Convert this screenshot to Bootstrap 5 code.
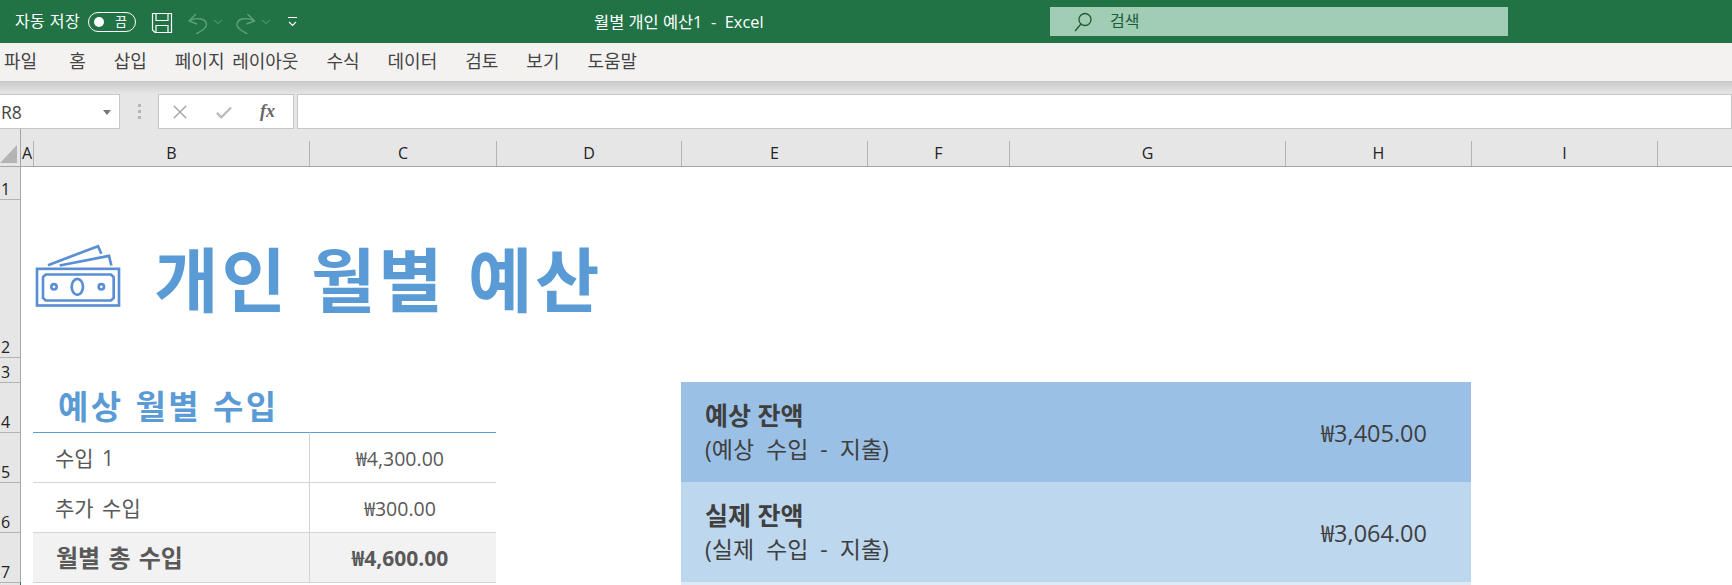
<!DOCTYPE html>
<html lang="ko">
<head>
<meta charset="utf-8">
<title>월별 개인 예산1 - Excel</title>
<link href="https://cdn.jsdelivr.net/npm/bootstrap@5.3.0/dist/css/bootstrap.min.css" rel="stylesheet">
<style>
html,body{height:585px;overflow:hidden;background:#fff}
body{font-family:"Open Sans","Noto Sans CJK KR",sans-serif;color:#595959;line-height:1.2}
.xl-title{height:43px;background:#217346;color:#fff;font-size:14px}
.xl-auto{margin-left:15px;font-size:16px;letter-spacing:.4px}
.xl-toggle{width:48px;height:20px;margin-left:8px;border:1px solid #fff;border-radius:10px;padding:0 8px 0 5px;font-size:13px}
.xl-dot{width:10px;height:10px;border-radius:50%;background:#fff}
.xl-qat{margin-left:15px;gap:7px}
.xl-save{margin:3px 8px 0 0}
.xl-cust{margin-left:2px}
.xl-doc{margin-left:295px;width:456px;font-size:16.4px;white-space:pre}
.xl-search{width:458px;height:29px;background:#a0cdb3;color:#1d5c3a;padding-left:23px;gap:17px;font-size:16px}
.xl-tabs{height:38px;background:#f3f2f1;color:#444;font-size:18px;word-spacing:3px;padding-left:4px;gap:28px}
.xl-tabs span:first-child{margin-right:4px}
.xl-shadow{height:13px;background:linear-gradient(#c9c9c9,#e6e6e6)}
.xl-fbar{height:35px;background:#e6e6e6;gap:4px}
.xl-box{height:35px;background:#fff;border:1px solid #c6c6c6}
.xl-name{width:120px;border-left:0;padding:2px 8px 0 1px;font-size:17.5px;color:#444}
.xl-caret{width:0;height:0;border:4px solid transparent;border-top:5px solid #777;border-bottom:0}
.xl-grip{width:30px;gap:3px}
.xl-grip i{width:3px;height:3px;background:#b5b5b5;display:block}
.xl-fx{width:136px;margin-right:-1px;padding-left:13px;gap:27px}
.xl-fxt{font-family:"Liberation Serif",serif;font-style:italic;font-weight:700;font-size:18px;color:#666}
.xl-grid{display:grid;grid-template-columns:21px 12px 276px 187px 185px 186px 142px 276px 186px 186px 1fr;grid-template-rows:37px 33px 158px 25px 50px 50px 50px 50px 3px;background:#fff}
.xl-cnr{background:#e6e6e6;position:relative;height:38px;border-bottom:1px solid #a6a6a6;border-right:1px solid #a6a6a6;z-index:1}
.xl-cnr::after{content:"";position:absolute;left:0;bottom:3px;border-style:solid;border-width:0 0 18px 17px;border-color:transparent transparent #b4b4b4 transparent}
.xl-colbg{height:38px;z-index:1;background:#e6e6e6;border-bottom:1px solid #a6a6a6;display:flex;align-items:flex-end}
.xl-col{flex:1;height:25px;display:flex;align-items:center;justify-content:center;border-left:1px solid #b4b4b4;font-size:16px;color:#222}
.xl-colbg.xl-first .xl-col{border-left:0}
.xl-row{grid-column:1;background:#e6e6e6;border-right:1px solid #a6a6a6;border-top:1px solid #b4b4b4;font-size:16px;color:#222;padding-left:1px;display:flex;align-items:flex-end;line-height:20px;overflow:hidden}
.xl-r8{border-right-color:#217346}
.xl-head{grid-column:2/7;grid-row:3;padding-left:12.3px;padding-top:40px;gap:31px;align-items:flex-start}
.xl-head svg{margin-top:4px}
.xl-h1{font-size:70px;font-weight:700;color:#5b9bd5;letter-spacing:2.8px;line-height:76px;white-space:nowrap;font-family:"Noto Sans CJK KR",sans-serif}
.xl-h2{grid-column:3/5;grid-row:5;font-size:33px;font-weight:700;color:#5b9bd5;padding-left:25px;line-height:47px;letter-spacing:2.5px;font-family:"Noto Sans CJK KR",sans-serif;white-space:nowrap}
.xl-lab,.xl-amt{border-top:1px solid #d4d4d4;display:flex;align-items:center;font-size:19.5px;padding-top:2px}
.xl-lab{grid-column:3;padding-left:22px;font-size:21px;word-spacing:3px}
.xl-amt{grid-column:4;justify-content:center;padding-right:6px;border-left:1px solid #d4d4d4}
.xl-blue{border-top-color:#5b9bd5}
.xl-tot{background:#f2f2f2;font-weight:700}
.xl-lab.xl-tot{font-size:24px;padding-left:23px;word-spacing:2px}
.xl-amt.xl-tot{font-size:21px}
.xl-rule{grid-column:3/5;grid-row:9;border-top:1px solid #d4d4d4}
.xl-pan{grid-column:6/10;padding:0 44px 0 24px;color:#3f3f3f}
.xl-p1{grid-row:5/7;background:#9bc0e6}
.xl-p2{grid-row:7/9;background:#bdd7ee}
.xl-p3{grid-row:9;background:#deebf7}
.xl-pt{font-size:25px;font-weight:700;line-height:35px}
.xl-ps{font-size:23px;word-spacing:6px;line-height:33px}
.xl-pa{font-size:23.5px;padding-top:2px}
</style>
</head>
<body>
<header class="xl-title d-flex align-items-center">
  <span class="xl-auto">자동 저장</span>
  <span class="xl-toggle d-flex align-items-center justify-content-between"><span class="xl-dot"></span><span>끔</span></span>
  <div class="xl-qat d-flex align-items-center">
    <svg class="xl-save" width="22" height="22" viewBox="0 0 22 22" fill="none" stroke="#fff" stroke-width="1.2"><path d="M1.5 1.5h19v19H4l-2.5-2.5z"/><path d="M5 1.5v7h12v-7M5 20.500v-7h12v7"/></svg>
    <svg width="41" height="24" viewBox="0 0 41 24" fill="none" stroke="#5fa07c" stroke-width="1.4"><path d="M8 4 1 11l8 3M1 11C8 7 18 8 18.500 14.500 18.900 18 14 21 8 24"/><path d="M26 10l4 3.500 4-3.500" stroke-width="1"/></svg>
    <svg width="41" height="24" viewBox="0 0 41 24" fill="none" stroke="#5fa07c" stroke-width="1.4"><path d="M11.500 4l7 7-8 3M18.500 11C11.500 7 1.500 8 1 14.500.6 18 5.500 21 11.500 24"/><path d="M26 10l4 3.500 4-3.500" stroke-width="1"/></svg>
    <svg class="xl-cust" width="13" height="12" viewBox="0 0 13 12" fill="none" stroke="#fff" stroke-width="1.1"><path d="M2 1.500h9M3 6l3.500 3.500L10 6"/></svg>
  </div>
  <span class="xl-doc">월별 개인 예산1  -  Excel</span>
  <div class="xl-search d-flex align-items-center">
    <svg width="20" height="20" viewBox="0 0 20 20" fill="none" stroke="#1d5c3a" stroke-width="1.300"><circle cx="12" cy="7.500" r="6"/><path d="M8 12l-6 7"/></svg>
    <span>검색</span>
  </div>
</header>
<nav class="xl-tabs d-flex align-items-center">
  <span>파일</span><span>홈</span><span>삽입</span><span>페이지 레이아웃</span><span>수식</span><span>데이터</span><span>검토</span><span>보기</span><span>도움말</span>
</nav>
<div class="xl-shadow"></div>
<div class="xl-fbar d-flex">
  <div class="xl-box xl-name d-flex align-items-center justify-content-between"><span>R8</span><span class="xl-caret"></span></div>
  <div class="xl-grip d-flex flex-column align-items-center justify-content-center"><i></i><i></i><i></i></div>
  <div class="xl-box xl-fx d-flex align-items-center">
    <svg width="16" height="16" viewBox="0 0 18 18" fill="none" stroke="#aaa" stroke-width="1.8"><path d="M2 2l14 14M16 2 2 16"/></svg>
    <svg width="18" height="16" viewBox="0 0 18 18" fill="none" stroke="#bbb" stroke-width="2.6"><path d="M1 10l5 5L17 4"/></svg>
    <span class="xl-fxt">fx</span>
  </div>
  <div class="xl-box flex-grow-1"></div>
</div>
<main class="xl-grid">
  <div class="xl-cnr"></div>
  <div class="xl-colbg xl-first"><div class="xl-col">A</div></div>
  <div class="xl-colbg"><div class="xl-col">B</div></div>
  <div class="xl-colbg"><div class="xl-col">C</div></div>
  <div class="xl-colbg"><div class="xl-col">D</div></div>
  <div class="xl-colbg"><div class="xl-col">E</div></div>
  <div class="xl-colbg"><div class="xl-col">F</div></div>
  <div class="xl-colbg"><div class="xl-col">G</div></div>
  <div class="xl-colbg"><div class="xl-col">H</div></div>
  <div class="xl-colbg"><div class="xl-col">I</div></div>
  <div class="xl-colbg"><div class="xl-col"></div></div>

  <div class="xl-row" style="grid-row:2">1</div>
  <div class="xl-row" style="grid-row:3">2</div>
  <div class="xl-row" style="grid-row:4">3</div>
  <div class="xl-row" style="grid-row:5">4</div>
  <div class="xl-row" style="grid-row:6">5</div>
  <div class="xl-row" style="grid-row:7">6</div>
  <div class="xl-row" style="grid-row:8">7</div>
  <div class="xl-row xl-r8" style="grid-row:9"></div>

  <div class="xl-head d-flex">
    <svg width="90" height="67" viewBox="40 40 270 200" fill="none" stroke="#5b8fd5" stroke-width="8">
      <rect x="52" y="117" width="246" height="110"/>
      <path d="M78 134h196l8 8v62l-8 8H78l-8-8v-62z"/>
      <circle cx="103" cy="171" r="8"/><circle cx="245" cy="171" r="8"/>
      <ellipse cx="173" cy="171" rx="17" ry="24"/>
      <path d="M85 106 235 49l10 23M120 107l148-29 7 29"/>
    </svg>
    <h1 class="xl-h1 m-0">개인 월별 예산</h1>
  </div>

  <h2 class="xl-h2 m-0">예상 월별 수입</h2>
  <div class="xl-lab xl-blue" style="grid-row:6">수입 1</div>
  <div class="xl-amt xl-blue" style="grid-row:6">₩4,300.00</div>
  <div class="xl-lab" style="grid-row:7">추가 수입</div>
  <div class="xl-amt" style="grid-row:7">₩300.00</div>
  <div class="xl-lab xl-tot" style="grid-row:8">월별 총 수입</div>
  <div class="xl-amt xl-tot" style="grid-row:8">₩4,600.00</div>
  <div class="xl-rule"></div>

  <section class="xl-pan xl-p1 d-flex align-items-center justify-content-between">
    <div><div class="xl-pt">예상 잔액</div><div class="xl-ps">(예상 수입 - 지출)</div></div>
    <div class="xl-pa">₩3,405.00</div>
  </section>
  <section class="xl-pan xl-p2 d-flex align-items-center justify-content-between">
    <div><div class="xl-pt">실제 잔액</div><div class="xl-ps">(실제 수입 - 지출)</div></div>
    <div class="xl-pa">₩3,064.00</div>
  </section>
  <section class="xl-pan xl-p3"></section>
</main>
<script src="https://cdn.jsdelivr.net/npm/bootstrap@5.3.0/dist/js/bootstrap.bundle.min.js"></script>
</body>
</html>
